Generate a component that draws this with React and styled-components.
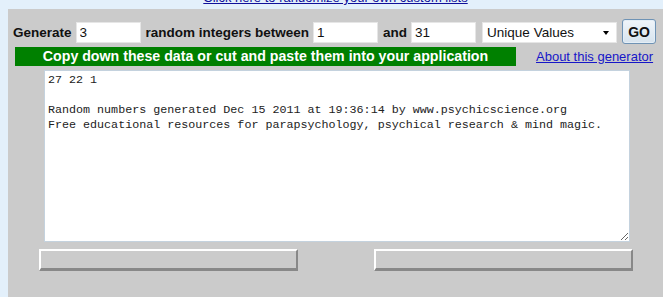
import React from 'react'
import styled, { createGlobalStyle } from 'styled-components'

const GlobalStyle = createGlobalStyle`
    html, body {
        margin: 0;
        padding: 0;
        background: #e3f0fb;
        font-family: "Liberation Sans", Arial, sans-serif;
        overflow: hidden;
    }
`

const output = `27 22 1

Random numbers generated Dec 15 2011 at 19:36:14 by www.psychicscience.org
Free educational resources for parapsychology, psychical research & mind magic.`

export default function App() {
    return (
        <Page>
            <GlobalStyle />
            <TopStrip>
                <TopLink href="#">Click here to randomize your own custom lists</TopLink>
            </TopStrip>
            <Panel>
                <FormRow>
                    <Label>Generate</Label>
                    <NumberInput defaultValue="3" />
                    <Label>random integers between</Label>
                    <NumberInput defaultValue="1" />
                    <Label>and</Label>
                    <NumberInput defaultValue="31" />
                    <SelectWrap>
                        <Select defaultValue="unique">
                            <option value="unique">Unique Values</option>
                            <option value="repeat">Allow Repeats</option>
                        </Select>
                        <Arrow />
                    </SelectWrap>
                    <GoButton>GO</GoButton>
                </FormRow>
                <BannerRow>
                    <Banner>Copy down these data or cut and paste them into your application</Banner>
                    <AboutLink href="#">About this generator</AboutLink>
                </BannerRow>
                <Output defaultValue={output} spellCheck={false} />
                <ButtonRow>
                    <BlankButton />
                    <BlankButton />
                </ButtonRow>
            </Panel>
        </Page>
    )
}

const Page = styled.div`
    width: 663px;
    height: 297px;
    overflow: hidden;
`

const TopStrip = styled.div`
    height: 9px;
    overflow: hidden;
    display: flex;
    justify-content: center;
`

const TopLink = styled.a`
    display: block;
    flex-shrink: 0;
    margin-top: -10px;
    margin-left: 8px;
    color: #10109a;
    font-size: 13px;
    line-height: 16px;
    text-decoration: underline;
`

const Panel = styled.div`
    margin-left: 8px;
    height: 288px;
    background: #cbcbcb;
    box-sizing: border-box;
    padding-top: 13px;
`

const FormRow = styled.div`
    display: flex;
    align-items: center;
    height: 21px;
    padding-left: 5px;
`

const Label = styled.span`
    flex-shrink: 0;
    font-weight: bold;
    font-size: 13.5px;
    color: #111;
    margin-right: 4px;
    white-space: nowrap;
`

const NumberInput = styled.input`
    flex-shrink: 0;
    width: 65px;
    height: 21px;
    box-sizing: border-box;
    border: 1px solid #e6e6e6;
    background: #fff;
    padding: 0 3px;
    font-family: "Liberation Sans", Arial, sans-serif;
    font-size: 13.5px;
    color: #111;
    margin-right: 5px;
    outline: none;
`

const SelectWrap = styled.div`
    position: relative;
    flex-shrink: 0;
    margin-left: 1px;
    margin-right: 5px;
`

const Select = styled.select`
    display: block;
    appearance: none;
    width: 135px;
    height: 21px;
    box-sizing: border-box;
    border: 1px solid #e6e6e6;
    border-radius: 0;
    background: #fff;
    padding: 0 4px;
    font-family: "Liberation Sans", Arial, sans-serif;
    font-size: 13.5px;
    color: #111;
    outline: none;
`

const Arrow = styled.span`
    position: absolute;
    right: 8px;
    top: 9px;
    width: 0;
    height: 0;
    border-left: 3.5px solid transparent;
    border-right: 3.5px solid transparent;
    border-top: 4px solid #000;
    pointer-events: none;
`

const GoButton = styled.button`
    flex-shrink: 0;
    width: 34px;
    height: 25px;
    box-sizing: border-box;
    border: 1px solid #6f93b5;
    border-radius: 3px;
    background: linear-gradient(#f0f5fa, #d6e3ee);
    box-shadow: inset 0 0 0 1px #e4eef6;
    font-family: "Liberation Sans", Arial, sans-serif;
    font-weight: bold;
    font-size: 14px;
    color: #111;
    padding: 0;
    margin-top: -2px;
`

const BannerRow = styled.div`
    display: flex;
    align-items: center;
    margin-top: 4px;
    padding-left: 7px;
`

const Banner = styled.div`
    flex-shrink: 0;
    width: 501px;
    height: 19px;
    background: #008000;
    color: #fff;
    font-weight: bold;
    font-size: 14.2px;
    line-height: 19px;
    text-align: center;
    white-space: nowrap;
`

const AboutLink = styled.a`
    flex-shrink: 0;
    margin-left: 20px;
    color: #1616c8;
    font-size: 13px;
    text-decoration: underline;
    white-space: nowrap;
`

const Output = styled.textarea`
    display: block;
    margin: 4px 0 0 36px;
    width: 586px;
    height: 172px;
    box-sizing: border-box;
    border: 1px solid #c4d2de;
    background: #fff;
    padding: 2px 3px;
    font-family: "Liberation Mono", "Courier New", monospace;
    font-size: 11.7px;
    line-height: 15px;
    color: #222;
    outline: none;
    resize: both;
`

const ButtonRow = styled.div`
    display: flex;
    gap: 76px;
    margin: 7px 0 0 31px;
`

const BlankButton = styled.button`
    flex-shrink: 0;
    width: 259px;
    height: 22px;
    box-sizing: border-box;
    background: #cbcbcb;
    border-top: 2px solid #fff;
    border-left: 2px solid #fff;
    border-right: 2px solid #888;
    border-bottom: 3px solid #888;
    padding: 0;
`
